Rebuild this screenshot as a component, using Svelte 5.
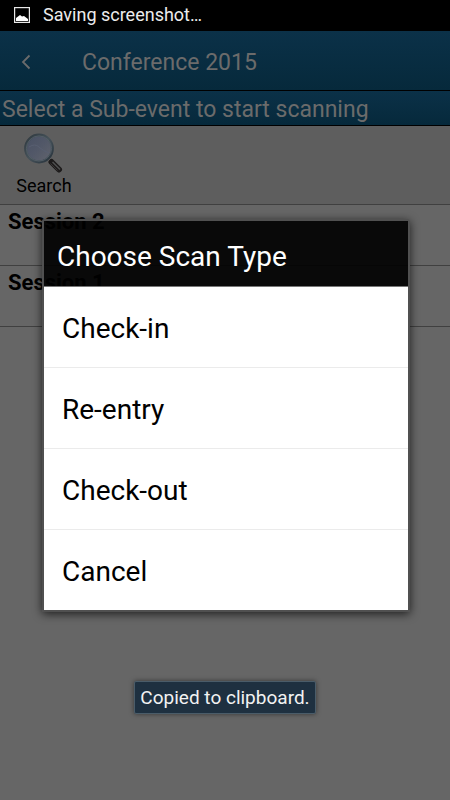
<script>
  const sessions = ['Session 2', 'Session 1'];
  const scanTypes = ['Check-in', 'Re-entry', 'Check-out', 'Cancel'];

  let open = $state(true);

  const choose = () => {
    open = false;
  };
</script>

<div class="screen">
  <div class="status-bar">
    <svg width="16" height="16" viewBox="0 0 16 16">
      <rect x="0.6" y="0.6" width="14.8" height="14.8" fill="none" stroke="#e8e8e8" stroke-width="1.2" />
      <path d="M2 14V11L4 9.5L6 8L8 9.5L10 9L14 12V14Z" fill="#fff" />
    </svg>
    <span>Saving screenshot…</span>
  </div>

  <div class="app">
    <header class="title-bar">
      <button class="back" aria-label="Back">
        <svg width="10" height="16" viewBox="0 0 10 16">
          <path d="M8.5 1.5L2 8L8.5 14.5" fill="none" stroke="#6b6b6b" stroke-width="1.8" />
        </svg>
      </button>
      <h1>Conference 2015</h1>
    </header>
    <h2 class="hint">Select a Sub-event to start scanning</h2>

    <div class="toolbar">
      <button class="search">
        <svg width="40" height="40" viewBox="0 0 40 40">
          <defs>
            <linearGradient id="rim" x1="0" y1="0" x2="1" y2="1">
              <stop offset="0" stop-color="#2e383e" />
              <stop offset="0.5" stop-color="#46525a" />
              <stop offset="1" stop-color="#26313a" />
            </linearGradient>
            <linearGradient id="glass" x1="0" y1="0" x2="1" y2="1">
              <stop offset="0" stop-color="#485063" />
              <stop offset="0.5" stop-color="#525868" />
              <stop offset="1" stop-color="#62656d" />
            </linearGradient>
          </defs>
          <path d="M24 25L28 29" stroke="#6a6a6a" stroke-width="3" />
          <path d="M27.5 29L35 36.5" stroke="#1d1b1b" stroke-width="6" stroke-linecap="round" />
          <path d="M28.5 29L36 36.5" stroke="#505050" stroke-width="1.4" />
          <path d="M26.5 30.5L33.5 37.5" stroke="#3a3736" stroke-width="1" />
          <circle cx="15" cy="15.5" r="13.4" fill="url(#glass)" stroke="url(#rim)" stroke-width="3" />
          <circle cx="15" cy="15.5" r="12.6" fill="none" stroke="#58636b" stroke-width="0.8" />
          <path d="M5 14Q11 10 15 14T25 20" fill="none" stroke="#585f71" stroke-width="1" />
        </svg>
        <span>Search</span>
      </button>
    </div>

    <ul class="sessions">
      {#each sessions as session}
        <li>{session}</li>
      {/each}
    </ul>
  </div>

  {#if open}
    <div class="overlay">
      <div class="dialog" role="dialog" aria-labelledby="dialog-title">
        <h2 id="dialog-title">Choose Scan Type</h2>
        {#each scanTypes as type}
          <button class="option" onclick={choose}>{type}</button>
        {/each}
      </div>
    </div>
  {/if}

  <div class="toast-area">
    <div class="toast" role="status">Copied to clipboard.</div>
  </div>
</div>

<style>
  :global(body) {
    margin: 0;
    background: #666;
  }
  .screen {
    position: relative;
    min-height: 100vh;
    background: #666;
    color: #000;
    font-family: Roboto, 'Liberation Sans', sans-serif;
  }
  h1,
  h2 {
    margin: 0;
    font-weight: 400;
  }
  button {
    border: 0;
    padding: 0;
    background: none;
    color: inherit;
    font-family: inherit;
    cursor: pointer;
  }
  .status-bar {
    display: flex;
    align-items: center;
    gap: 13px;
    height: 31px;
    padding: 0 14px 2px;
    box-sizing: border-box;
    background: #000;
    color: #ececec;
    font-size: 18px;
  }
  .title-bar {
    display: flex;
    align-items: center;
    height: 59px;
    border-bottom: 1px solid #000;
    background: linear-gradient(#0b3148, #06293b);
    color: #6b6b6b;
  }
  .back {
    display: flex;
    align-items: center;
    width: 82px;
    height: 59px;
    padding: 2px 0 0 21px;
    box-sizing: border-box;
  }
  h1 {
    padding-top: 4px;
    font-size: 23px;
  }
  .hint {
    height: 34px;
    padding: 0 2px;
    border-bottom: 1px solid #000;
    background: linear-gradient(#0b3148, #06293b);
    color: #6b6b6b;
    font-size: 23px;
    line-height: 38px;
  }
  .toolbar {
    display: flex;
    height: 78px;
    border-bottom: 1px solid #404040;
    background: #5e5e5e;
  }
  .search {
    display: flex;
    flex-direction: column;
    align-items: center;
    width: 88px;
    padding-top: 7px;
    font-size: 18px;
    line-height: 26px;
  }
  .sessions {
    margin: 0;
    padding: 0;
    list-style: none;
  }
  .sessions li {
    height: 60px;
    padding: 0 8px;
    border-bottom: 1px solid #404040;
    font-size: 22px;
    font-weight: 700;
    line-height: 33px;
  }
  .overlay {
    position: absolute;
    inset: 31px 0 0;
    display: flex;
    align-items: center;
    padding: 0 40px 0 42px;
  }
  .dialog {
    flex: 1;
    border: 2px solid #505050;
    border-radius: 2px;
    box-shadow: 0 2px 10px rgba(0, 0, 0, 0.7);
  }
  .dialog h2 {
    height: 65px;
    padding: 0 13px;
    border-bottom: 1px solid #777;
    background: rgba(0, 0, 0, 0.91);
    color: #fff;
    font-size: 28px;
    line-height: 72px;
  }
  .option {
    display: block;
    width: 100%;
    height: 81px;
    padding: 2px 18px 0;
    border-bottom: 1px solid #ebebeb;
    background: #fff;
    font-size: 28px;
    text-align: left;
  }
  .option:last-child {
    height: 80px;
    border-bottom: 0;
  }
  .toast-area {
    position: absolute;
    inset: auto 0 86px;
    display: flex;
    justify-content: center;
  }
  .toast {
    padding: 0 5px;
    border: 1px solid #4a5c69;
    border-radius: 2px;
    background: #1e3040;
    box-shadow: 0 0 5px rgba(0, 0, 0, 0.5);
    color: #f2f2f2;
    font-size: 19px;
    line-height: 31px;
  }
</style>
